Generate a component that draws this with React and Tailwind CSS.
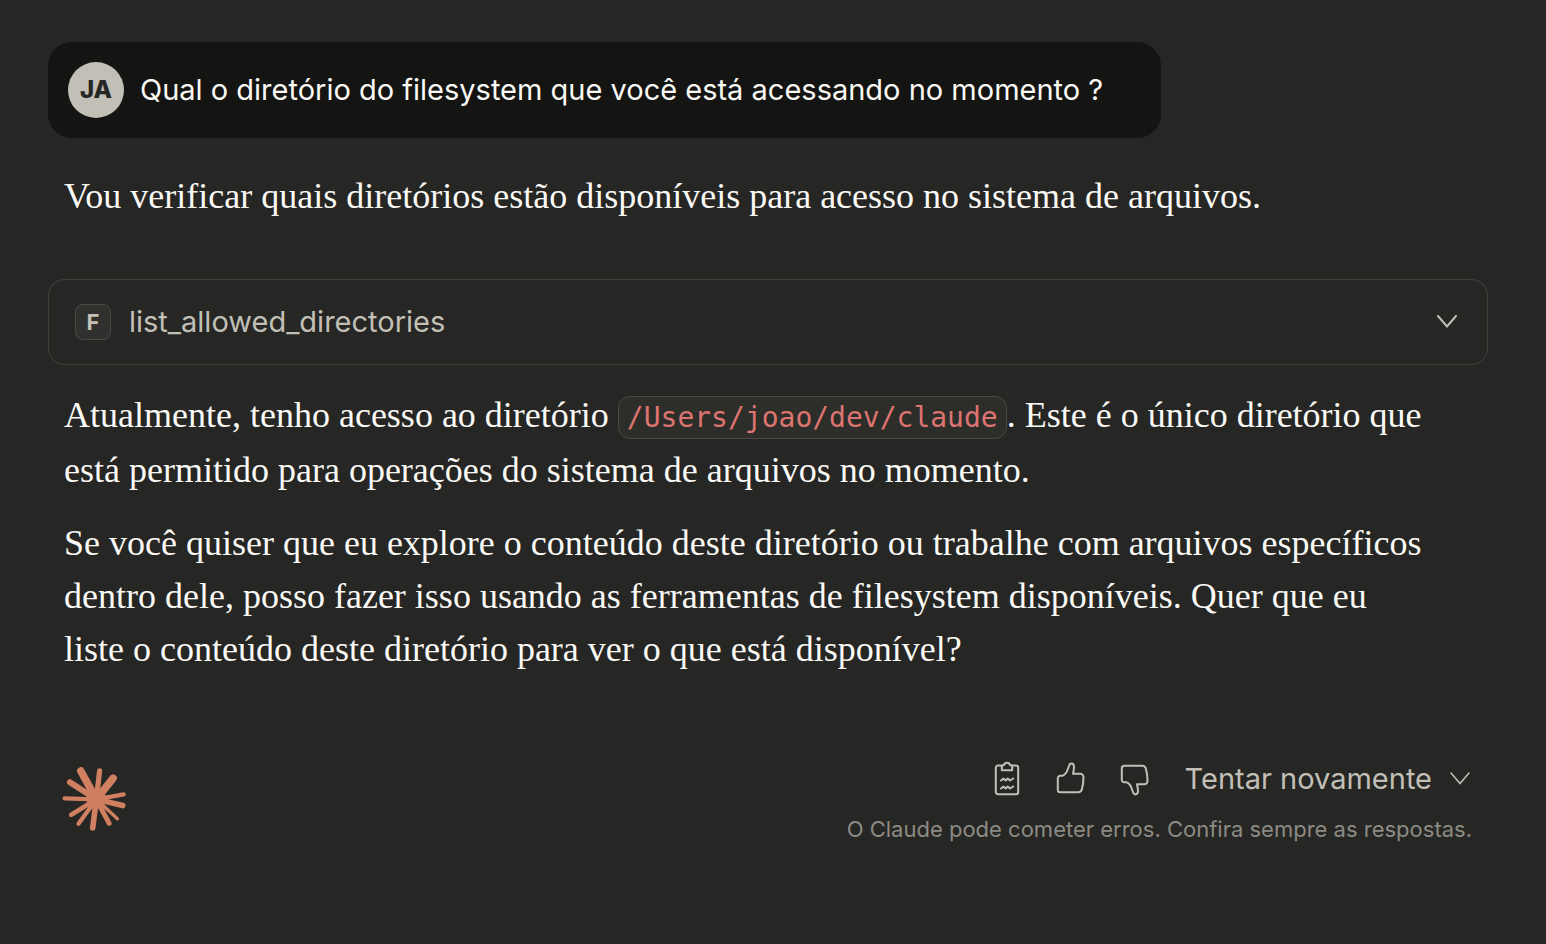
import React from "react";

const rays = [
  [92, 47, 23],
  [149, 47, 16],
  [190, 69, 23],
  [222, 118, 13],
  [219, 152, 17],
  [203, 192, 10],
  [178, 206, 15],
  [128, 220, 17],
  [85, 207, 13],
  [63, 180, 14],
  [43, 130, 13],
  [59, 81, 18],
];

function Starburst() {
  return (
    <svg className="size-16 shrink-0" viewBox="36 35 192 194" aria-hidden="true">
      <g stroke="#d07f61" strokeLinecap="round">
        {rays.map(([x, y, w]) => (
          <line key={`${x}-${y}`} x1="139" y1="133" x2={x} y2={y} strokeWidth={w} />
        ))}
      </g>
      <circle cx="139" cy="133" r="30" fill="#d07f61" />
    </svg>
  );
}

function Chevron({ className }) {
  return (
    <svg className={className} width="20" height="14" viewBox="0 0 20 14" fill="none" stroke="currentColor" strokeLinecap="round" aria-hidden="true">
      <path d="M1 1 10 11.500l9-10.500" />
    </svg>
  );
}

function ClipboardIcon() {
  return (
    <svg width="32" height="36" viewBox="0 0 32 36" fill="none" stroke="currentColor" strokeWidth="2" strokeLinejoin="round" strokeLinecap="round" aria-hidden="true">
      <path d="M10.500 4.500H7A2.200 2.200 0 0 0 4.800 6.700V31A2.200 2.200 0 0 0 7 33.200H25A2.200 2.200 0 0 0 27.200 31V6.700A2.200 2.200 0 0 0 25 4.500H21.500" />
      <path d="M10.800 9.200V5.500a1.200 1.200 0 0 1 1.200-1.200h.8c.4-1.700 1.600-2.600 3.200-2.600s2.800.9 3.200 2.600h.8a1.200 1.200 0 0 1 1.200 1.200v3.700Z" />
      <path d="M10 19.500 12.400 17.500l2.200 2 2.200-2 2.200 2L22.200 17.500M10 27.500l2.400-2 2.200 2 2.200-2 2.200 2 3.200-2" />
    </svg>
  );
}

function ThumbIcon({ className }) {
  return (
    <svg className={className} width="32" height="36" viewBox="0 0 32 36" fill="none" stroke="currentColor" strokeWidth="2" strokeLinejoin="round" strokeLinecap="round" aria-hidden="true">
      <path d="M2.800 17.200A2.500 2.500 0 0 1 5.300 14.700H7.200C9.800 14.200 11.500 11.500 12.500 9L14 5C14.600 3 15.200 2.600 16.200 2.600C18 2.600 19 4 19 6C19 8.500 18.500 10.500 18 12.700H25.200A3.300 3.300 0 0 1 28.500 16C28.500 20 28 24.500 26.900 28.200C26.300 30.400 25 31.200 23.200 31.200H5.300A2.500 2.500 0 0 1 2.800 28.700Z" />
    </svg>
  );
}

export default function App() {
  return (
    <div className="min-h-screen bg-[#262624] pt-[42px] pr-[58px] pb-24 pl-12 font-['Inter',sans-serif] text-[#faf9f5]">
      <main>
        <div className="flex w-fit items-center gap-4 rounded-3xl bg-[#141413] py-5 pr-[58px] pl-5">
          <div className="flex size-14 shrink-0 items-center justify-center rounded-full bg-[#c2c0b6] text-2xl font-extrabold text-[#262624]">
            JA
          </div>
          <p className="text-[29px] leading-10">Qual o diretório do filesystem que você está acessando no momento ?</p>
        </div>

        <div className="px-4 font-['Liberation_Serif',serif] text-[36px] leading-[53px]">
          <p className="pt-8 pb-14">Vou verificar quais diretórios estão disponíveis para acesso no sistema de arquivos.</p>
        </div>

        <button type="button" className="flex w-full items-center rounded-2xl border border-[#40403d] px-[26px] py-[22px] text-left text-[#c2c0b6]">
          <span className="flex size-9 items-center justify-center rounded-lg border border-[#4a4a47] bg-[#30302e] text-[22px] font-bold">
            F
          </span>
          <span className="ml-[18px] text-[29px] leading-10">list_allowed_directories</span>
          <Chevron className="mr-1 ml-auto stroke-2" />
        </button>

        <div className="space-y-5 pt-6 pr-14 pl-4 font-['Liberation_Serif',serif] text-[36px] leading-[53px]">
          <p>
            Atualmente, tenho acesso ao diretório{" "}
            <code className="rounded-xl border border-[#484844] bg-[#2d2d2a] px-2 py-1 font-['DejaVu_Sans_Mono',monospace] text-[28px] text-[#dd7470]">/Users/joao/dev/claude</code>
            . Este é o único diretório que está permitido para operações do sistema de arquivos no momento.
          </p>
          <p>
            Se você quiser que eu explore o conteúdo deste diretório ou trabalhe com arquivos específicos dentro dele, posso fazer isso usando as ferramentas de filesystem disponíveis. Quer que eu liste o conteúdo deste diretório para ver o que está disponível?
          </p>
        </div>
      </main>

      <footer className="flex items-start justify-between pt-[83px] pr-4 pl-[14px]">
        <div className="pt-2">
          <Starburst />
        </div>
        <div className="flex flex-col items-end text-[#c2c0b6]">
          <div className="flex items-center pr-0.5">
            <div className="flex gap-8">
              <button type="button" aria-label="Copiar"><ClipboardIcon /></button>
              <button type="button" aria-label="Boa resposta"><ThumbIcon /></button>
              <button type="button" aria-label="Resposta ruim"><ThumbIcon className="-scale-y-100" /></button>
            </div>
            <button type="button" className="ml-[34px] flex items-center gap-[18px] text-[29px] leading-10">
              Tentar novamente
              <Chevron className="stroke-[1.5]" />
            </button>
          </div>
          <p className="pt-3 text-[22px] leading-9 text-[#8c8b83]">O Claude pode cometer erros. Confira sempre as respostas.</p>
        </div>
      </footer>
    </div>
  );
}
